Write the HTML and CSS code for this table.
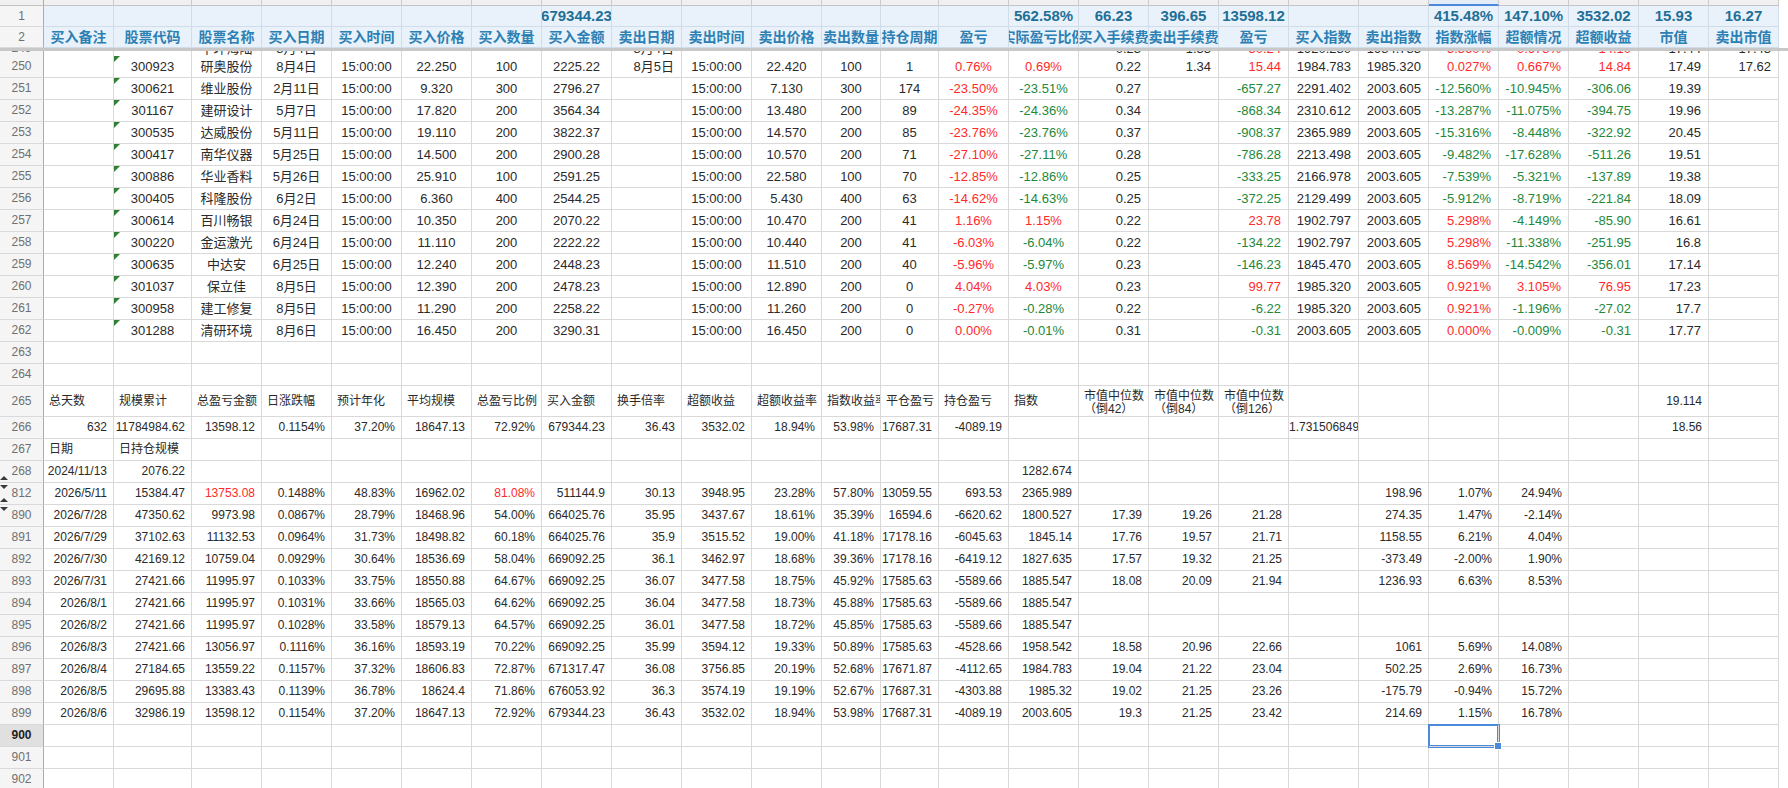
FILE: index.html
```html
<!DOCTYPE html>
<html lang="zh">
<head>
<meta charset="utf-8">
<title>Sheet</title>
<link rel="stylesheet" href="styles.css">
</head>
<body>
<div class="sheet">
<div class="row colhd"><span></span><span></span><span></span><span></span><span></span><span></span><span></span><span></span><span></span><span></span><span></span><span></span><span></span><span></span><span></span><span></span><span></span><span></span><span></span><span></span><span></span><span></span><span></span><span></span><span></span><span></span></div>
<div class="row hd h1"><span>1</span><span></span><span></span><span></span><span></span><span></span><span></span><span></span><span>679344.23</span><span></span><span></span><span></span><span></span><span></span><span></span><span>562.58%</span><span>66.23</span><span>396.65</span><span>13598.12</span><span></span><span></span><span>415.48%</span><span>147.10%</span><span>3532.02</span><span>15.93</span><span>16.27</span></div>
<div class="row hd"><span>2</span><span>买入备注</span><span>股票代码</span><span>股票名称</span><span>买入日期</span><span>买入时间</span><span>买入价格</span><span>买入数量</span><span>买入金额</span><span>卖出日期</span><span>卖出时间</span><span>卖出价格</span><span>卖出数量</span><span>持仓周期</span><span>盈亏</span><span>实际盈亏比例</span><span>买入手续费</span><span>卖出手续费</span><span>盈亏</span><span>买入指数</span><span>卖出指数</span><span>指数涨幅</span><span>超额情况</span><span>超额收益</span><span>市值</span><span>卖出市值</span></div>
<div class="freeze"></div>
<div class="peek"><div class="row data"><span>249</span><span></span><span></span><span>中环海陆</span><span>8月4日</span><span></span><span></span><span></span><span></span><span>8月4日</span><span></span><span></span><span></span><span></span><span></span><span></span><span>0.23</span><span>1.33</span><span class="r">-30.24</span><span>1920.280</span><span>1984.783</span><span class="r">3.360%</span><span class="r">0.678%</span><span class="r">14.10</span><span>17.44</span><span>17.43</span></div></div>
<div class="row data"><span>250</span><span></span><span>300923</span><span>研奥股份</span><span>8月4日</span><span>15:00:00</span><span>22.250</span><span>100</span><span>2225.22</span><span>8月5日</span><span>15:00:00</span><span>22.420</span><span>100</span><span>1</span><span class="r">0.76%</span><span class="r">0.69%</span><span>0.22</span><span>1.34</span><span class="r">15.44</span><span>1984.783</span><span>1985.320</span><span class="r">0.027%</span><span class="r">0.667%</span><span class="r">14.84</span><span>17.49</span><span>17.62</span></div>
<div class="row data"><span>251</span><span></span><span>300621</span><span>维业股份</span><span>2月11日</span><span>15:00:00</span><span>9.320</span><span>300</span><span>2796.27</span><span></span><span>15:00:00</span><span>7.130</span><span>300</span><span>174</span><span class="r">-23.50%</span><span class="g">-23.51%</span><span>0.27</span><span></span><span class="g">-657.27</span><span>2291.402</span><span>2003.605</span><span class="g">-12.560%</span><span class="g">-10.945%</span><span class="g">-306.06</span><span>19.39</span><span></span></div>
<div class="row data"><span>252</span><span></span><span>301167</span><span>建研设计</span><span>5月7日</span><span>15:00:00</span><span>17.820</span><span>200</span><span>3564.34</span><span></span><span>15:00:00</span><span>13.480</span><span>200</span><span>89</span><span class="r">-24.35%</span><span class="g">-24.36%</span><span>0.34</span><span></span><span class="g">-868.34</span><span>2310.612</span><span>2003.605</span><span class="g">-13.287%</span><span class="g">-11.075%</span><span class="g">-394.75</span><span>19.96</span><span></span></div>
<div class="row data"><span>253</span><span></span><span>300535</span><span>达威股份</span><span>5月11日</span><span>15:00:00</span><span>19.110</span><span>200</span><span>3822.37</span><span></span><span>15:00:00</span><span>14.570</span><span>200</span><span>85</span><span class="r">-23.76%</span><span class="g">-23.76%</span><span>0.37</span><span></span><span class="g">-908.37</span><span>2365.989</span><span>2003.605</span><span class="g">-15.316%</span><span class="g">-8.448%</span><span class="g">-322.92</span><span>20.45</span><span></span></div>
<div class="row data"><span>254</span><span></span><span>300417</span><span>南华仪器</span><span>5月25日</span><span>15:00:00</span><span>14.500</span><span>200</span><span>2900.28</span><span></span><span>15:00:00</span><span>10.570</span><span>200</span><span>71</span><span class="r">-27.10%</span><span class="g">-27.11%</span><span>0.28</span><span></span><span class="g">-786.28</span><span>2213.498</span><span>2003.605</span><span class="g">-9.482%</span><span class="g">-17.628%</span><span class="g">-511.26</span><span>19.51</span><span></span></div>
<div class="row data"><span>255</span><span></span><span>300886</span><span>华业香料</span><span>5月26日</span><span>15:00:00</span><span>25.910</span><span>100</span><span>2591.25</span><span></span><span>15:00:00</span><span>22.580</span><span>100</span><span>70</span><span class="r">-12.85%</span><span class="g">-12.86%</span><span>0.25</span><span></span><span class="g">-333.25</span><span>2166.978</span><span>2003.605</span><span class="g">-7.539%</span><span class="g">-5.321%</span><span class="g">-137.89</span><span>19.38</span><span></span></div>
<div class="row data"><span>256</span><span></span><span>300405</span><span>科隆股份</span><span>6月2日</span><span>15:00:00</span><span>6.360</span><span>400</span><span>2544.25</span><span></span><span>15:00:00</span><span>5.430</span><span>400</span><span>63</span><span class="r">-14.62%</span><span class="g">-14.63%</span><span>0.25</span><span></span><span class="g">-372.25</span><span>2129.499</span><span>2003.605</span><span class="g">-5.912%</span><span class="g">-8.719%</span><span class="g">-221.84</span><span>18.09</span><span></span></div>
<div class="row data"><span>257</span><span></span><span>300614</span><span>百川畅银</span><span>6月24日</span><span>15:00:00</span><span>10.350</span><span>200</span><span>2070.22</span><span></span><span>15:00:00</span><span>10.470</span><span>200</span><span>41</span><span class="r">1.16%</span><span class="r">1.15%</span><span>0.22</span><span></span><span class="r">23.78</span><span>1902.797</span><span>2003.605</span><span class="r">5.298%</span><span class="g">-4.149%</span><span class="g">-85.90</span><span>16.61</span><span></span></div>
<div class="row data"><span>258</span><span></span><span>300220</span><span>金运激光</span><span>6月24日</span><span>15:00:00</span><span>11.110</span><span>200</span><span>2222.22</span><span></span><span>15:00:00</span><span>10.440</span><span>200</span><span>41</span><span class="r">-6.03%</span><span class="g">-6.04%</span><span>0.22</span><span></span><span class="g">-134.22</span><span>1902.797</span><span>2003.605</span><span class="r">5.298%</span><span class="g">-11.338%</span><span class="g">-251.95</span><span>16.8</span><span></span></div>
<div class="row data"><span>259</span><span></span><span>300635</span><span>中达安</span><span>6月25日</span><span>15:00:00</span><span>12.240</span><span>200</span><span>2448.23</span><span></span><span>15:00:00</span><span>11.510</span><span>200</span><span>40</span><span class="r">-5.96%</span><span class="g">-5.97%</span><span>0.23</span><span></span><span class="g">-146.23</span><span>1845.470</span><span>2003.605</span><span class="r">8.569%</span><span class="g">-14.542%</span><span class="g">-356.01</span><span>17.14</span><span></span></div>
<div class="row data"><span>260</span><span></span><span>301037</span><span>保立佳</span><span>8月5日</span><span>15:00:00</span><span>12.390</span><span>200</span><span>2478.23</span><span></span><span>15:00:00</span><span>12.890</span><span>200</span><span>0</span><span class="r">4.04%</span><span class="r">4.03%</span><span>0.23</span><span></span><span class="r">99.77</span><span>1985.320</span><span>2003.605</span><span class="r">0.921%</span><span class="r">3.105%</span><span class="r">76.95</span><span>17.23</span><span></span></div>
<div class="row data"><span>261</span><span></span><span>300958</span><span>建工修复</span><span>8月5日</span><span>15:00:00</span><span>11.290</span><span>200</span><span>2258.22</span><span></span><span>15:00:00</span><span>11.260</span><span>200</span><span>0</span><span class="r">-0.27%</span><span class="g">-0.28%</span><span>0.22</span><span></span><span class="g">-6.22</span><span>1985.320</span><span>2003.605</span><span class="r">0.921%</span><span class="g">-1.196%</span><span class="g">-27.02</span><span>17.7</span><span></span></div>
<div class="row data"><span>262</span><span></span><span>301288</span><span>清研环境</span><span>8月6日</span><span>15:00:00</span><span>16.450</span><span>200</span><span>3290.31</span><span></span><span>15:00:00</span><span>16.450</span><span>200</span><span>0</span><span class="r">0.00%</span><span class="g">-0.01%</span><span>0.31</span><span></span><span class="g">-0.31</span><span>2003.605</span><span>2003.605</span><span class="r">0.000%</span><span class="g">-0.009%</span><span class="g">-0.31</span><span>17.77</span><span></span></div>
<div class="row lo"><span>263</span><span></span><span></span><span></span><span></span><span></span><span></span><span></span><span></span><span></span><span></span><span></span><span></span><span></span><span></span><span></span><span></span><span></span><span></span><span></span><span></span><span></span><span></span><span></span><span></span><span></span></div>
<div class="row lo"><span>264</span><span></span><span></span><span></span><span></span><span></span><span></span><span></span><span></span><span></span><span></span><span></span><span></span><span></span><span></span><span></span><span></span><span></span><span></span><span></span><span></span><span></span><span></span><span></span><span></span><span></span></div>
<div class="row lo tall"><span>265</span><span class="t">总天数</span><span class="t">规模累计</span><span class="t">总盈亏金额</span><span class="t">日涨跌幅</span><span class="t">预计年化</span><span class="t">平均规模</span><span class="t">总盈亏比例</span><span class="t">买入金额</span><span class="t">换手倍率</span><span class="t">超额收益</span><span class="t">超额收益率</span><span class="t">指数收益率</span><span class="t">平仓盈亏</span><span class="t">持仓盈亏</span><span class="t">指数</span><span class="t two">市值中位数<br>（倒42）</span><span class="t two">市值中位数<br>（倒84）</span><span class="t two">市值中位数<br>（倒126）</span><span></span><span></span><span></span><span></span><span></span><span>19.114</span><span></span></div>
<div class="row lo"><span>266</span><span>632</span><span>11784984.62</span><span>13598.12</span><span>0.1154%</span><span>37.20%</span><span>18647.13</span><span>72.92%</span><span>679344.23</span><span>36.43</span><span>3532.02</span><span>18.94%</span><span>53.98%</span><span>17687.31</span><span>-4089.19</span><span></span><span></span><span></span><span></span><span>1.731506849</span><span></span><span></span><span></span><span></span><span>18.56</span><span></span></div>
<div class="row lo"><span>267</span><span class="t">日期</span><span class="t">日持仓规模</span><span></span><span></span><span></span><span></span><span></span><span></span><span></span><span></span><span></span><span></span><span></span><span></span><span></span><span></span><span></span><span></span><span></span><span></span><span></span><span></span><span></span><span></span><span></span></div>
<div class="row lo"><span class="up">268</span><span>2024/11/13</span><span>2076.22</span><span></span><span></span><span></span><span></span><span></span><span></span><span></span><span></span><span></span><span></span><span></span><span></span><span>1282.674</span><span></span><span></span><span></span><span></span><span></span><span></span><span></span><span></span><span></span><span></span></div>
<div class="row lo"><span class="up dn">812</span><span>2026/5/11</span><span>15384.47</span><span class="r">13753.08</span><span>0.1488%</span><span>48.83%</span><span>16962.02</span><span class="r">81.08%</span><span>511144.9</span><span>30.13</span><span>3948.95</span><span>23.28%</span><span>57.80%</span><span>13059.55</span><span>693.53</span><span>2365.989</span><span></span><span></span><span></span><span></span><span>198.96</span><span>1.07%</span><span>24.94%</span><span></span><span></span><span></span></div>
<div class="row lo"><span class="dn">890</span><span>2026/7/28</span><span>47350.62</span><span>9973.98</span><span>0.0867%</span><span>28.79%</span><span>18468.96</span><span>54.00%</span><span>664025.76</span><span>35.95</span><span>3437.67</span><span>18.61%</span><span>35.39%</span><span>16594.6</span><span>-6620.62</span><span>1800.527</span><span>17.39</span><span>19.26</span><span>21.28</span><span></span><span>274.35</span><span>1.47%</span><span>-2.14%</span><span></span><span></span><span></span></div>
<div class="row lo"><span>891</span><span>2026/7/29</span><span>37102.63</span><span>11132.53</span><span>0.0964%</span><span>31.73%</span><span>18498.82</span><span>60.18%</span><span>664025.76</span><span>35.9</span><span>3515.52</span><span>19.00%</span><span>41.18%</span><span>17178.16</span><span>-6045.63</span><span>1845.14</span><span>17.76</span><span>19.57</span><span>21.71</span><span></span><span>1158.55</span><span>6.21%</span><span>4.04%</span><span></span><span></span><span></span></div>
<div class="row lo"><span>892</span><span>2026/7/30</span><span>42169.12</span><span>10759.04</span><span>0.0929%</span><span>30.64%</span><span>18536.69</span><span>58.04%</span><span>669092.25</span><span>36.1</span><span>3462.97</span><span>18.68%</span><span>39.36%</span><span>17178.16</span><span>-6419.12</span><span>1827.635</span><span>17.57</span><span>19.32</span><span>21.25</span><span></span><span>-373.49</span><span>-2.00%</span><span>1.90%</span><span></span><span></span><span></span></div>
<div class="row lo"><span>893</span><span>2026/7/31</span><span>27421.66</span><span>11995.97</span><span>0.1033%</span><span>33.75%</span><span>18550.88</span><span>64.67%</span><span>669092.25</span><span>36.07</span><span>3477.58</span><span>18.75%</span><span>45.92%</span><span>17585.63</span><span>-5589.66</span><span>1885.547</span><span>18.08</span><span>20.09</span><span>21.94</span><span></span><span>1236.93</span><span>6.63%</span><span>8.53%</span><span></span><span></span><span></span></div>
<div class="row lo"><span>894</span><span>2026/8/1</span><span>27421.66</span><span>11995.97</span><span>0.1031%</span><span>33.66%</span><span>18565.03</span><span>64.62%</span><span>669092.25</span><span>36.04</span><span>3477.58</span><span>18.73%</span><span>45.88%</span><span>17585.63</span><span>-5589.66</span><span>1885.547</span><span></span><span></span><span></span><span></span><span></span><span></span><span></span><span></span><span></span><span></span></div>
<div class="row lo"><span>895</span><span>2026/8/2</span><span>27421.66</span><span>11995.97</span><span>0.1028%</span><span>33.58%</span><span>18579.13</span><span>64.57%</span><span>669092.25</span><span>36.01</span><span>3477.58</span><span>18.72%</span><span>45.85%</span><span>17585.63</span><span>-5589.66</span><span>1885.547</span><span></span><span></span><span></span><span></span><span></span><span></span><span></span><span></span><span></span><span></span></div>
<div class="row lo"><span>896</span><span>2026/8/3</span><span>27421.66</span><span>13056.97</span><span>0.1116%</span><span>36.16%</span><span>18593.19</span><span>70.22%</span><span>669092.25</span><span>35.99</span><span>3594.12</span><span>19.33%</span><span>50.89%</span><span>17585.63</span><span>-4528.66</span><span>1958.542</span><span>18.58</span><span>20.96</span><span>22.66</span><span></span><span>1061</span><span>5.69%</span><span>14.08%</span><span></span><span></span><span></span></div>
<div class="row lo"><span>897</span><span>2026/8/4</span><span>27184.65</span><span>13559.22</span><span>0.1157%</span><span>37.32%</span><span>18606.83</span><span>72.87%</span><span>671317.47</span><span>36.08</span><span>3756.85</span><span>20.19%</span><span>52.68%</span><span>17671.87</span><span>-4112.65</span><span>1984.783</span><span>19.04</span><span>21.22</span><span>23.04</span><span></span><span>502.25</span><span>2.69%</span><span>16.73%</span><span></span><span></span><span></span></div>
<div class="row lo"><span>898</span><span>2026/8/5</span><span>29695.88</span><span>13383.43</span><span>0.1139%</span><span>36.78%</span><span>18624.4</span><span>71.86%</span><span>676053.92</span><span>36.3</span><span>3574.19</span><span>19.19%</span><span>52.67%</span><span>17687.31</span><span>-4303.88</span><span>1985.32</span><span>19.02</span><span>21.25</span><span>23.26</span><span></span><span>-175.79</span><span>-0.94%</span><span>15.72%</span><span></span><span></span><span></span></div>
<div class="row lo"><span>899</span><span>2026/8/6</span><span>32986.19</span><span>13598.12</span><span>0.1154%</span><span>37.20%</span><span>18647.13</span><span>72.92%</span><span>679344.23</span><span>36.43</span><span>3532.02</span><span>18.94%</span><span>53.98%</span><span>17687.31</span><span>-4089.19</span><span>2003.605</span><span>19.3</span><span>21.25</span><span>23.42</span><span></span><span>214.69</span><span>1.15%</span><span>16.78%</span><span></span><span></span><span></span></div>
<div class="row lo"><span class="act">900</span><span></span><span></span><span></span><span></span><span></span><span></span><span></span><span></span><span></span><span></span><span></span><span></span><span></span><span></span><span></span><span></span><span></span><span></span><span></span><span></span><span class="sel"></span><span></span><span></span><span></span><span></span></div>
<div class="row lo"><span>901</span><span></span><span></span><span></span><span></span><span></span><span></span><span></span><span></span><span></span><span></span><span></span><span></span><span></span><span></span><span></span><span></span><span></span><span></span><span></span><span></span><span></span><span></span><span></span><span></span><span></span></div>
<div class="row lo"><span>902</span><span></span><span></span><span></span><span></span><span></span><span></span><span></span><span></span><span></span><span></span><span></span><span></span><span></span><span></span><span></span><span></span><span></span><span></span><span></span><span></span><span></span><span></span><span></span><span></span><span></span></div>
</div>
</body>
</html>
```

FILE: styles.css
```css
* { box-sizing: border-box; }
html, body { margin: 0; padding: 0; }
body {
  width: 1788px;
  height: 788px;
  overflow: hidden;
  background: #fff;
  font-family: "Liberation Sans", "Noto Sans CJK SC", sans-serif;
  color: #2a2a2a;
}
.sheet { display: flex; flex-direction: column; }

.row {
  display: grid;
  grid-template-columns: 44px 70px 78px repeat(9, 70px) 59px 58px repeat(12, 70px);
  width: 1779px;
  height: 22px;
  flex: none;
}
.row > span {
  display: block;
  border-right: 1px solid #d9d9d9;
  border-bottom: 1px solid #d9d9d9;
  white-space: nowrap;
  overflow: hidden;
  line-height: 21px;
}
.row > span:first-child {
  background: #f5f5f5;
  border-right: 1px solid #acacac;
  color: #707070;
  font-size: 12px;
  font-weight: normal;
  text-align: center;
  padding: 0;
  position: relative;
}

/* column letter strip (mostly scrolled off) */
.colhd { height: 6px; }
.colhd > span { background: #f0f0f0; border-right-color: #cccccc; border-bottom-color: #c4c4c4; }
.colhd > span:first-child { background: #f0f0f0; border-bottom-color: #c4c4c4; }
.colhd > span:nth-child(22) { border-bottom: 2px solid #4a89dc; background: #e4ecf7; }

/* header band */
.hd { height: 21px; }
.hd > span {
  display: flex;
  justify-content: center;
  align-items: center;
  background: #e9f2fb;
  border-right-color: #d0dce8;
  border-bottom-color: #d0dce8;
  color: #2c80b3;
  font-weight: bold;
  font-size: 14px;
  line-height: 20px;
}
.hd > span:first-child {
  background: #f5f5f5;
  border-right-color: #acacac;
  border-bottom-color: #d9d9d9;
}
.h1 > span { color: #1f6f96; font-size: 15px; }

.freeze { width: 1788px; height: 3px; background: #c8c8c8; flex: none; }
.peek { height: 5px; overflow: hidden; flex: none; }
.peek > .row { margin-top: -13px; }

/* upper trade table */
.data > span { font-size: 13px; text-align: center; }
.data > span:nth-child(10),
.data > span:nth-child(n+17) { text-align: right; padding-right: 7px; }
.data > span:nth-child(3) { position: relative; }
.data > span:nth-child(3):not(:empty)::before {
  content: "";
  position: absolute;
  left: 0;
  top: 0;
  border-top: 6px solid #2f7f34;
  border-right: 6px solid transparent;
}

/* lower summary table */
.lo > span { font-size: 12px; text-align: right; padding-right: 6px; }
.lo > span.t { text-align: left; padding-left: 5px; padding-right: 0; }
.tall { height: 31px; }
.tall > span { line-height: 30px; }
.tall > span.two { white-space: normal; line-height: 13px; padding-top: 4px; }

.r { color: #ff2a2a; }
.g { color: #23873a; }

/* row group markers */
.up::after {
  content: "";
  position: absolute;
  left: 0;
  bottom: 2px;
  border-left: 4px solid transparent;
  border-right: 4px solid transparent;
  border-bottom: 4px solid #3a3a3a;
}
.dn::before {
  content: "";
  position: absolute;
  left: 0;
  top: 2px;
  border-left: 4px solid transparent;
  border-right: 4px solid transparent;
  border-top: 4px solid #3a3a3a;
}

/* active cell */
.row > span.act { background: #e0e0e0; color: #222; font-weight: bold; }
.row > span.sel {
  position: relative;
  overflow: visible;
  z-index: 2;
  box-shadow: 0 0 0 1px #4a89dc, inset 0 0 0 1px #4a89dc;
}
.sel::after {
  content: "";
  position: absolute;
  right: -4px;
  bottom: -4px;
  width: 6px;
  height: 6px;
  background: #4a89dc;
  border: 1px solid #fff;
}
```
